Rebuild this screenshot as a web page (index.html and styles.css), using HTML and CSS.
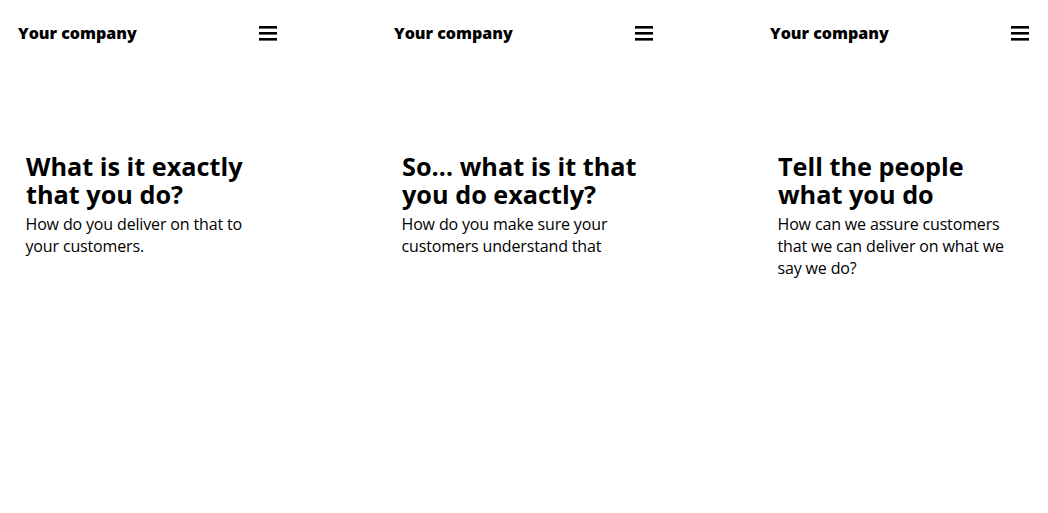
FILE: index.html
```html
<!DOCTYPE html>
<html lang="en">
<head>
<meta charset="utf-8">
<title>Your company</title>
<link rel="stylesheet" href="styles.css">
</head>
<body>
<div class="screens">
  <section class="screen">
    <header class="bar">
      <span class="logo">Your company</span>
      <svg class="menu" width="18" height="15" viewBox="0 0 18 15" aria-hidden="true"><rect x="0" y="0" width="18" height="2.6"/><rect x="0" y="6" width="18" height="2.6"/><rect x="0" y="12" width="18" height="2.6"/></svg>
    </header>
    <div class="hero">
      <h1>What is it exactly that you do?</h1>
      <p>How do you deliver on that to your customers.</p>
    </div>
  </section>
  <section class="screen">
    <header class="bar">
      <span class="logo">Your company</span>
      <svg class="menu" width="18" height="15" viewBox="0 0 18 15" aria-hidden="true"><rect x="0" y="0" width="18" height="2.6"/><rect x="0" y="6" width="18" height="2.6"/><rect x="0" y="12" width="18" height="2.6"/></svg>
    </header>
    <div class="hero">
      <h1>So… what is it that you do exactly?</h1>
      <p>How do you make sure your customers understand that</p>
    </div>
  </section>
  <section class="screen">
    <header class="bar">
      <span class="logo">Your company</span>
      <svg class="menu" width="18" height="15" viewBox="0 0 18 15" aria-hidden="true"><rect x="0" y="0" width="18" height="2.6"/><rect x="0" y="6" width="18" height="2.6"/><rect x="0" y="12" width="18" height="2.6"/></svg>
    </header>
    <div class="hero">
      <h1>Tell the people what you do</h1>
      <p>How can we assure customers that we can deliver on what we say we do?</p>
    </div>
  </section>
</div>
</body>
</html>
```
FILE: styles.css
```css
* { box-sizing: border-box; }
html, body { margin: 0; padding: 0; background: #fff; }
body {
  font-family: "Open Sans", "DejaVu Sans", sans-serif;
  color: #000;
  width: 1048px;
  height: 513px;
  overflow: hidden;
}
.screens {
  display: grid;
  grid-template-columns: repeat(3, 296px);
  column-gap: 80px;
}
.screen {
  padding: 0 18px;
}
.bar {
  height: 66px;
  display: flex;
  align-items: center;
  justify-content: space-between;
  padding-right: 1px;
}
.logo {
  font-weight: 800;
  font-size: 16px;
  line-height: 20px;
}
.menu { display: block; fill: #000; }
.hero {
  padding: 86px 8px 0 8px;
}
.hero h1 {
  margin: 0;
  font-size: 25.25px;
  line-height: 28px;
  font-weight: 700;
}
.hero p {
  margin: 5px 0 0 -0.5px;
  font-size: 16px;
  line-height: 22px;
  letter-spacing: -0.15px;
}
```
